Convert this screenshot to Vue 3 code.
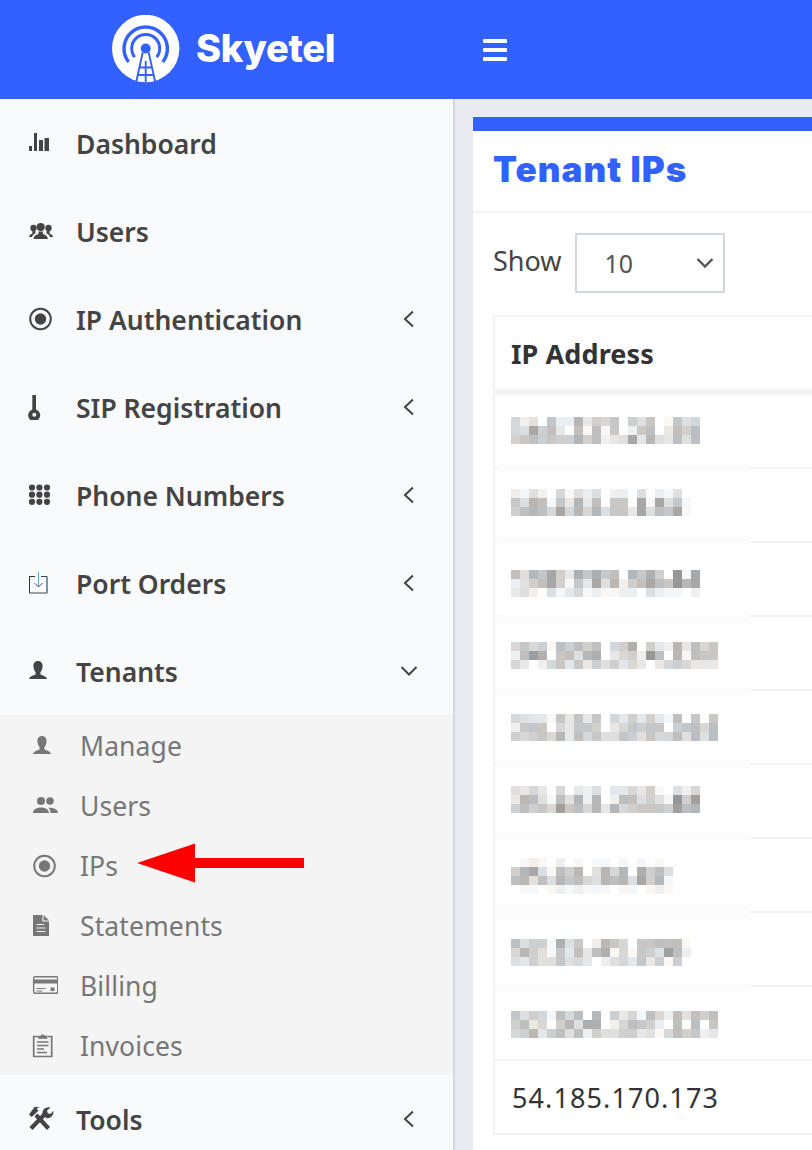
<script setup>
const nav1 = [
  { label: 'Dashboard', icon: 'bars' },
  { label: 'Users', icon: 'group' },
  { label: 'IP Authentication', icon: 'target', chev: 'left' },
  { label: 'SIP Registration', icon: 'key', chev: 'left' },
  { label: 'Phone Numbers', icon: 'dots', chev: 'left' },
  { label: 'Port Orders', icon: 'port', chev: 'left' },
  { label: 'Tenants', icon: 'person', chev: 'down' },
]
const subs = [
  { label: 'Manage', icon: 'person' },
  { label: 'Users', icon: 'people' },
  { label: 'IPs', icon: 'target' },
  { label: 'Statements', icon: 'doc' },
  { label: 'Billing', icon: 'card' },
  { label: 'Invoices', icon: 'clip' },
]
// Blurred addresses: each character is a 9px cell's darkness (0 = white, hex scale)
const blurRows = [
  { top: 22, band: 67, bandH: 9, lines: ['524072293657064701745', '54b683081817027803868', '6786766968234b3943848'] },
  { top: 20, band: 65, bandH: 9, lines: ['2142051424022040214', '74981739380770b1b471', '68985b59594773b487b1'] },
  { top: 27, band: 72, bandH: 9, lines: ['8497b63a7a78097a60d1b', '2468b6173b49268b87d9b0', '342041351211220421102'] },
  { top: 25, band: 70, bandH: 9, lines: ['5756186868056a063293857', '28ca07849a03562d8091877', '53025737364635303565333'] },
  { top: 23, band: 68, bandH: 9, lines: ['54331737370536363180707', '27770537760357677067858', '65675938574476475584848'] },
  { top: 21, band: 66, bandH: 9, lines: ['435305032403353610425', '398418492902884641d6c', '68675c785939567776c89'] },
  { top: 19, band: 64, bandH: 18, lines: ['01210201011010101', '69b41869049590a684', '89484978549894b691', '011012121110110121'] },
  { top: 26, band: 71, bandH: 9, lines: ['84661a47029750778881', '5964173838a151764c82', '43644745302453736160'] },
  { top: 24, band: 0, bandH: 0, lines: ['74651858090635185284868', '68350694aa0258762080807', '56936848264466341586723'] },
]
let seed = 12345
const rnd = () => {
  seed = (seed * 16807) % 2147483647
  return seed / 2147483647
}
const mosaic = blurRows.map((r) => ({
  top: r.top,
  band: r.band,
  bandH: r.bandH,
  lines: r.lines.map((l) =>
    l.split('').map((ch) => {
      const d = parseInt(ch, 16)
      const v = 255 - d * 8
      const t = d === 0 ? 0 : Math.round(rnd() * 8 - 4)
      return `rgb(${Math.min(255, v + t)},${v},${Math.min(255, v - t)})`
    })
  ),
}))
</script>

<template>
  <div class="page">
    <header class="topbar">
      <div class="brand">
        <svg class="logo" viewBox="0 0 70 70" width="70" height="70" aria-hidden="true">
          <circle cx="34.700" cy="33.500" r="33.700" fill="#fff" />
          <g fill="none" stroke="#3361ff">
            <path d="M17.600 47A21.700 21.700 0 1 1 51.800 47" stroke-width="3.500" />
            <path d="M23.700 42.100A14 14 0 1 1 45.700 42.100" stroke-width="3" />
            <path d="M31.700 37.500 25.200 67M37.700 37.500 44.200 67M34.700 46V67M29 52.500H40.400M26.700 60H42.700" stroke-width="1.900" />
          </g>
          <circle cx="34.700" cy="33.500" r="5" fill="#3361ff" />
        </svg>
        <span class="brandname">Skyetel</span>
      </div>
      <button class="burger" aria-label="Menu"><i></i><i></i><i></i></button>
    </header>

    <div class="body">
      <aside class="sidebar">
        <nav>
          <a v-for="n in nav1" :key="n.label" class="item">
            <span class="ic"><svg width="26" height="26" viewBox="0 0 26 26"><use :href="'#i-' + n.icon" /></svg></span>
            <span class="lbl">{{ n.label }}</span>
            <svg v-if="n.chev === 'left'" class="chev" width="18" height="18" viewBox="0 0 18 18"><path d="M13 1.500 5 9l8 7.500" /></svg>
            <svg v-if="n.chev === 'down'" class="chev" width="18" height="18" viewBox="0 0 18 18"><path d="M1.500 5 9 12.500 16.500 5" /></svg>
          </a>
          <div class="sub">
            <a v-for="s in subs" :key="s.label" class="subitem">
              <span class="ic"><svg width="26" height="26" viewBox="0 0 26 26"><use :href="'#i-' + s.icon" /></svg></span>
              <span>{{ s.label }}</span>
            </a>
            <svg class="arrow" width="170" height="44" viewBox="0 0 170 44"><path d="M1 21 59 1.500V16H168V26H59V40.500Z" fill="#ff0000" /></svg>
          </div>
          <a class="item">
            <span class="ic"><svg width="26" height="26" viewBox="0 0 26 26"><use href="#i-tools" /></svg></span>
            <span class="lbl">Tools</span>
            <svg class="chev" width="18" height="18" viewBox="0 0 18 18"><path d="M13 1.500 5 9l8 7.500" /></svg>
          </a>
        </nav>
      </aside>

      <main class="main">
        <section class="card">
          <h1 class="title">Tenant IPs</h1>
          <div class="cardbody">
            <div class="show">
              <span class="showlbl">Show</span>
              <div class="select">
                <span>10</span>
                <svg width="18" height="12" viewBox="0 0 18 12"><path d="M1.500 2 9 9.500 16.500 2" /></svg>
              </div>
            </div>
            <div class="table">
              <div class="th">IP Address</div>
              <div v-for="(r, i) in mosaic" :key="i" class="tr">
                <div class="blur" :style="{ top: r.top + 'px' }">
                  <div v-for="(l, j) in r.lines" :key="j" class="mline">
                    <i v-for="(c, k) in l" :key="k" :style="{ background: c }"></i>
                  </div>
                </div>
                <div v-if="r.bandH" class="band" :style="{ top: r.band + 'px', height: r.bandH + 'px' }"></div>
              </div>
              <div class="tr last">54.185.170.173</div>
            </div>
          </div>
        </section>
      </main>
    </div>

    <svg width="0" height="0" class="defs">
      <defs>
        <g id="i-bars" fill="currentColor">
          <path d="M1 16h3v5H1zM6 3h3v18H6zM11 10h4v11h-4zM16.500 8H21v13h-4.500z" />
        </g>
        <g id="i-group" fill="currentColor">
          <circle cx="12.700" cy="9" r="4" /><path d="M5.500 21c.3-3.800 3.500-4.200 5-5v-2.500h4.400V16c1.500.8 4.700 1.200 5 5z" />
          <circle cx="5.500" cy="10" r="3.200" /><path d="M1 19c.2-2.300 2.500-3 3.400-3.500v-2.500h3v2.500c-1.500.7-3 1.700-3.300 3.500z" />
          <circle cx="20.500" cy="10" r="3.200" /><path d="M25 19c-.2-2.300-2.500-3-3.400-3.500v-2.500h-3v2.500c1.500.7 3 1.700 3.300 3.500z" />
        </g>
        <g id="i-target">
          <circle cx="12.500" cy="13" r="10.300" fill="none" stroke="currentColor" stroke-width="2" />
          <circle cx="12.500" cy="13" r="5.700" fill="currentColor" />
        </g>
        <g id="i-key" fill="currentColor">
          <path d="M4.300 1h3.700v14.500a6 6 0 1 1-3.700 0z" />
          <circle cx="6.300" cy="20.700" r="2" fill="#f9fafc" />
        </g>
        <g id="i-dots" fill="currentColor">
          <circle cx="4" cy="5.500" r="3.100" /><circle cx="11.400" cy="5.500" r="3.100" /><circle cx="19" cy="5.500" r="3.100" />
          <circle cx="4" cy="12.700" r="3.100" /><circle cx="11.400" cy="12.700" r="3.100" /><circle cx="19" cy="12.700" r="3.100" />
          <circle cx="4" cy="19.800" r="3.100" /><circle cx="11.400" cy="19.800" r="3.100" /><circle cx="19" cy="19.800" r="3.100" />
        </g>
        <g id="i-port" fill="none" stroke-width="1">
          <path d="M7 6.500H1.500v16.500h17.500V6.500H13" stroke="#444" />
          <path d="M1.500 6.500v16.500M7 6.500H1.500" stroke="#333" />
          <path d="M19 6.500v16.500" stroke="#4a86c8" />
          <path d="M10.500 2v15" stroke="#5aa2e0" />
          <path d="M6.500 13l4 4 4-4" stroke="#555" />
        </g>
        <g id="i-person" fill="currentColor">
          <path d="M10 3c3 0 4.600 2.300 4.600 5 0 2.500-1 4.800-2.200 6.200v2.200c1.500.8 6.100 1.400 6.600 4.600H1c.5-3.200 5.100-3.800 6.600-4.600v-2.200C6.400 12.800 5.400 10.500 5.400 8 5.400 5.300 7 3 10 3z" />
        </g>
        <g id="i-people" fill="currentColor">
          <circle cx="9" cy="8" r="4" /><circle cx="18" cy="8" r="3.800" />
          <path d="M1 20c0-3.800 4.500-5.500 8-5.500s8 1.700 8 5.500zM18.500 20c0-2.400-.7-4-2.200-5.200 3.700-.5 9.700 1 9.700 5.200z" />
        </g>
        <g id="i-doc">
          <path fill="currentColor" d="M1 2h10.500L17 7.500V23H1z" />
          <path fill="none" stroke="#f4f4f4" stroke-width="1.200" d="M11 2v6h6M4.500 11.500H12M4.500 15h9M4.500 18.500h9" />
        </g>
        <g id="i-card">
          <rect x="1.700" y="3.700" width="24.600" height="16.600" rx="1.500" fill="none" stroke="currentColor" stroke-width="1.500" transform="scale(.98 1)" />
          <path d="M1.500 6.500h24v4h-24z" fill="currentColor" />
          <path d="M4.500 15.500h9M4.500 18h6" stroke="currentColor" stroke-width="1.200" />
          <path d="M18.500 14.500h4v3.500h-4z" fill="currentColor" />
        </g>
        <g id="i-clip" fill="none" stroke="currentColor">
          <path d="M6 3.500H1.700v20h18v-20H15.500" stroke-width="1.700" />
          <path d="M6.500 5.500V3h2.200a2.200 2.200 0 0 1 4 0H15v2.500z" fill="currentColor" stroke-width=".6" />
          <path d="M5 9h11.500M5 12.500h11.500M5 16h7M5 19.500h10" stroke-width="1.400" />
        </g>
        <g id="i-tools">
          <path d="M3 22.500 17 8" stroke="currentColor" stroke-width="4.200" fill="none" />
          <path d="M20.500 22.500 8 9" stroke="currentColor" stroke-width="4.200" fill="none" />
          <path fill="currentColor" d="M1 8.500 3.500 11 6.500 8.500 10.500 4.500 8.500 2.500 12 1 6.500 1z" />
          <path fill="currentColor" d="M14.500 8c-.5-3.500 2.500-7.500 8-6.500l-3.500 3 .8 2.700 2.700.8 2.800-3.200c.8 5-3.500 8.200-7 7.200z" />
        </g>
      </defs>
    </svg>
  </div>
</template>

<style>
html, body { margin: 0; background: #fff; }
</style>

<style scoped>
.page {
  width: 812px;
  height: 1150px;
  overflow: hidden;
  position: relative;
  font-family: "Noto Sans", "Open Sans", Roboto, sans-serif;
  color: #444;
}
.defs { position: absolute; }
.topbar {
  height: 99px;
  background: #3361ff;
  display: flex;
  align-items: center;
}
.brand {
  width: 453px;
  display: flex;
  align-items: center;
  padding-left: 111px;
  box-sizing: border-box;
  gap: 15px;
}
.logo { margin-top: 1px; }
.brandname {
  font-family: Inter, sans-serif;
  font-weight: 800;
  font-size: 38px;
  letter-spacing: -.3px;
  color: #fff;
  line-height: 1;
  margin-top: -3px;
}
.burger {
  margin-left: 30px;
  width: 24px;
  padding: 0;
  background: none;
  border: 0;
  display: flex;
  flex-direction: column;
  gap: 5px;
}
.burger i { display: block; height: 4px; background: #fff; border-radius: 1px; }
.body { display: flex; height: 1051px; }
.sidebar {
  width: 455px;
  flex: none;
  box-sizing: border-box;
  background: #f9fafc;
  border-right: 2px solid #d3d7e1;
}
.item {
  height: 88px;
  display: flex;
  align-items: center;
  padding: 0 26px 0 28px;
  box-sizing: border-box;
  color: #444;
  font-weight: 600;
  font-size: 26.500px;
}
.ic { width: 48px; flex: none; display: flex; align-items: center; height: 26px; }
.ic svg { display: block; }
.lbl { flex: 1; padding-top: 2px; }
.chev { fill: none; stroke: #444; stroke-width: 2; margin-right: 9px; }
.sub {
  position: relative;
  background: #f4f4f4;
  padding: 1px 0;
  height: 360px;
  box-sizing: border-box;
}
.subitem {
  height: 60px;
  display: flex;
  align-items: center;
  padding-left: 32px;
  color: #777;
  font-size: 26.500px;
  letter-spacing: .1px;
}
.arrow { position: absolute; left: 136px; top: 127px; }
.main {
  flex: 1;
  background: #e9ebf1;
  padding: 18px 0 0 18px;
  min-width: 0;
}
.card {
  background: #fff;
  border-top: 14px solid #3361ff;
  height: 1040px;
}
.title {
  margin: 0;
  height: 82px;
  box-sizing: border-box;
  padding: 0 0 5px 20px;
  display: flex;
  align-items: center;
  border-bottom: 2px solid #f4f4f4;
  font-family: Inter, sans-serif;
  font-weight: 900;
  font-size: 35px;
  letter-spacing: 1.100px;
  color: #3361ff;
}
.cardbody { padding: 20px 0 0 20px; }
.show { display: flex; align-items: center; gap: 13px; height: 60px; }
.showlbl { font-size: 27px; color: #444; margin-top: -6px; }
.select {
  width: 150px;
  height: 60px;
  box-sizing: border-box;
  border: 2px solid #d3d7e1;
  display: flex;
  align-items: center;
  justify-content: space-between;
  padding: 0 9px 0 28px;
  font-size: 25px;
  color: #555;
}
.select svg { fill: none; stroke: #555; stroke-width: 2.400; }
.table {
  margin-top: 22px;
  border: solid #f3f3f3;
  border-width: 2px 0 0 2px;
}
.th {
  height: 72px;
  display: flex;
  align-items: center;
  padding-left: 16px;
  border-bottom: 6px solid #f3f3f3;
  font-weight: 700;
  font-size: 27px;
  letter-spacing: .1px;
  color: #333;
}
.tr {
  position: relative;
  height: 74px;
  box-sizing: border-box;
  border-bottom: 2px solid #f3f3f3;
}
.tr.last {
  display: flex;
  align-items: center;
  padding-left: 17px;
  font-size: 27px;
  letter-spacing: 1.100px;
  color: #333;
}
.blur { position: absolute; left: 16px; }
.band {
  position: absolute;
  left: 2px;
  width: 253px;
  background: #fcfcfc;
  z-index: 1;
}
.mline { display: flex; height: 9px; }
.mline i { display: block; width: 9px; height: 9px; flex: none; }
</style>
